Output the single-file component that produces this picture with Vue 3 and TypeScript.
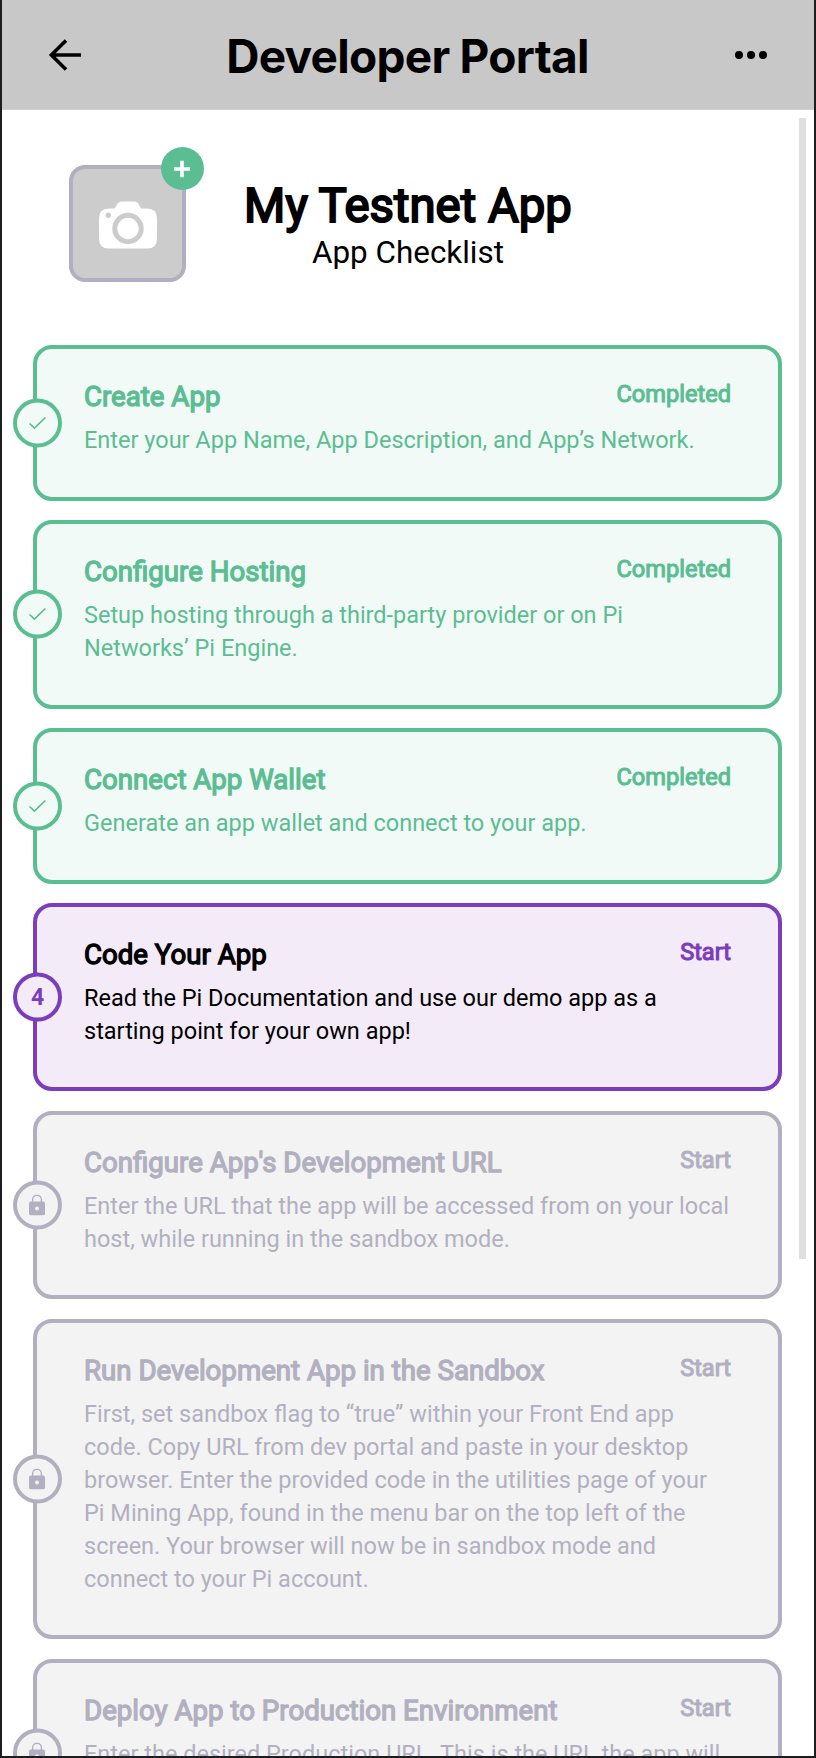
<script setup lang="ts">
type StepState = 'done' | 'active' | 'locked'

interface Step {
  title: string
  status: string
  state: StepState
  text: string
}

const steps: Step[] = [
  {
    title: 'Create App',
    status: 'Completed',
    state: 'done',
    text: 'Enter your App Name, App Description, and App’s Network.',
  },
  {
    title: 'Configure Hosting',
    status: 'Completed',
    state: 'done',
    text: 'Setup hosting through a third-party provider or on Pi\nNetworks’ Pi Engine.',
  },
  {
    title: 'Connect App Wallet',
    status: 'Completed',
    state: 'done',
    text: 'Generate an app wallet and connect to your app.',
  },
  {
    title: 'Code Your App',
    status: 'Start',
    state: 'active',
    text: 'Read the Pi Documentation and use our demo app as a\nstarting point for your own app!',
  },
  {
    title: "Configure App's Development URL",
    status: 'Start',
    state: 'locked',
    text: 'Enter the URL that the app will be accessed from on your local\nhost, while running in the sandbox mode.',
  },
  {
    title: 'Run Development App in the Sandbox',
    status: 'Start',
    state: 'locked',
    text: 'First, set sandbox flag to “true” within your Front End app\ncode. Copy URL from dev portal and paste in your desktop\nbrowser. Enter the provided code in the utilities page of your\nPi Mining App, found in the menu bar on the top left of the\nscreen. Your browser will now be in sandbox mode and\nconnect to your Pi account.',
  },
  {
    title: 'Deploy App to Production Environment',
    status: 'Start',
    state: 'locked',
    text: 'Enter the desired Production URL. This is the URL the app will',
  },
]
</script>

<template>
  <div class="screen">
    <header class="bar">
      <svg class="back" viewBox="0 0 34 34" width="34" height="34">
        <path d="M33 17H3.500M18 2.400L3.400 17L18 31.600" fill="none" stroke="#000" stroke-width="3.6" />
      </svg>
      <h1 class="bar-title">Developer Portal</h1>
      <svg class="more" viewBox="0 0 32 8" width="32" height="8">
        <circle cx="4" cy="4" r="4" />
        <circle cx="16" cy="4" r="4" />
        <circle cx="28" cy="4" r="4" />
      </svg>
    </header>

    <section class="app">
      <div class="avatar">
        <svg class="camera" viewBox="0 0 58 48" width="58" height="48">
          <path
            d="M10 7.5H15.500L18.600 2.600Q20 .5 22.500 .5H35.500Q38 .5 39.400 2.600L42 7.500H48Q58 7.500 58 17.500V37.500Q58 47.500 48 47.500H10Q0 47.500 0 37.500V17.500Q0 7.500 10 7.500Z"
            fill="#fff"
          />
          <circle cx="29" cy="27.500" r="13.200" fill="none" stroke="#ccc" stroke-width="5" />
          <circle cx="9.300" cy="14.200" r="2.700" fill="#ccc" />
        </svg>
        <span class="add">
          <svg viewBox="0 0 16 18" width="16" height="18">
            <path d="M8 .8V17.200M0 9H16" stroke="#fff" stroke-width="3.600" />
          </svg>
        </span>
      </div>
      <div class="app-text">
        <h2 class="app-name">My Testnet App</h2>
        <p class="app-sub">App Checklist</p>
      </div>
    </section>

    <ol class="steps">
      <li v-for="(step, i) in steps" :key="step.title" class="step" :class="step.state">
        <span class="badge">
          <svg v-if="step.state === 'done'" viewBox="0 0 17 13" width="17" height="13">
            <path d="M.6 7L5.400 11.600L16.400 1" fill="none" stroke="currentColor" stroke-width="1.700" />
          </svg>
          <span v-else-if="step.state === 'active'" class="num">{{ i + 1 }}</span>
          <svg v-else class="lock" viewBox="0 0 16 21" width="16" height="21">
            <path d="M3.600 8V5.200A4.400 4.400 0 0 1 12.400 5.200V8" fill="none" stroke="currentColor" stroke-width="1.400" />
            <rect x="0" y="7" width="16" height="14" rx="2" fill="currentColor" />
            <circle cx="8" cy="14" r="1.900" fill="#f3f3f3" />
          </svg>
        </span>
        <div class="row">
          <h3 class="title">{{ step.title }}</h3>
          <span class="status">{{ step.status }}</span>
        </div>
        <p class="desc">{{ step.text }}</p>
      </li>
    </ol>

    <div class="scrollbar"></div>
  </div>
</template>

<style>
body {
  margin: 0;
  overflow: hidden;
}
</style>

<style scoped>
.screen {
  position: relative;
  box-sizing: border-box;
  width: 816px;
  height: 1758px;
  overflow: hidden;
  border: 2px solid #1d1d20;
  border-top: 0;
  background: #fff;
  color: #000;
  font-family: Roboto, 'Liberation Sans', sans-serif;
}

h1,
h2,
h3,
p,
ol {
  margin: 0;
  padding: 0;
  font-weight: 400;
}

.bar {
  display: flex;
  align-items: center;
  justify-content: space-between;
  box-sizing: border-box;
  height: 110px;
  padding: 0 47px 0 46px;
  border-bottom: 1px solid #d2d2d2;
  background: #c8c8c8;
}

.bar-title {
  padding: 3px 2px 0 0;
  font-family: Inter, sans-serif;
  font-size: 46px;
  font-weight: 700;
  line-height: 56px;
  letter-spacing: -0.720px;
  white-space: nowrap;
}

.app {
  display: grid;
  grid-template-columns: 117px auto 117px;
  justify-content: space-between;
  box-sizing: border-box;
  height: 235.300px;
  padding: 55px 67px 0;
}

.avatar {
  position: relative;
  display: flex;
  align-items: center;
  justify-content: center;
  box-sizing: border-box;
  width: 117px;
  height: 117px;
  border: 4px solid #b2b0c0;
  border-radius: 16px;
  background: #ccc;
}

.camera {
  margin: 2px 0 0 0;
}

.add {
  position: absolute;
  top: -22px;
  right: -22px;
  display: flex;
  align-items: center;
  justify-content: center;
  box-sizing: border-box;
  width: 43px;
  height: 43px;
  padding-right: 1px;
  border-radius: 50%;
  background: #5bbd92;
}

.app-text {
  padding-top: 13px;
  text-align: center;
}

.app-name {
  font-size: 47.300px;
  line-height: 56px;
  white-space: nowrap;
  -webkit-text-stroke: 2px currentColor;
}

.app-sub {
  font-size: 31.400px;
  line-height: 38px;
}

.steps {
  display: flex;
  flex-direction: column;
  gap: 19.400px;
  margin: 0 32px 0 31px;
  list-style: none;
}

.step {
  position: relative;
  flex: none;
  box-sizing: border-box;
  padding: 32px 47px 39.500px 47px;
  border: 4px solid currentColor;
  border-radius: 19px;
}

.step:last-child {
  min-height: 188.500px;
}

.done {
  color: #5bbd92;
  background: #f2faf7;
}

.active {
  color: #7b3dbc;
  background: #f3ebf7;
}

.locked {
  color: #b2b0c0;
  background: #f3f3f3;
}

.badge {
  position: absolute;
  top: 50%;
  left: -24px;
  display: flex;
  align-items: center;
  justify-content: center;
  box-sizing: border-box;
  width: 49px;
  height: 49px;
  border: 4px solid currentColor;
  border-radius: 50%;
  background: inherit;
  transform: translateY(-50%);
}

.lock {
  margin-right: 1px;
}

.num {
  font-size: 23px;
  font-weight: 700;
  line-height: 28px;
}

.row {
  display: flex;
  align-items: flex-start;
  justify-content: space-between;
  height: 43px;
}

.title {
  font-size: 27.650px;
  line-height: 32px;
  white-space: nowrap;
  -webkit-text-stroke: 1.300px currentColor;
}

.status {
  font-size: 23.600px;
  line-height: 27px;
  -webkit-text-stroke: 1.100px currentColor;
}

.desc {
  font-size: 23.500px;
  line-height: 33px;
  white-space: pre;
}

.active .title,
.active .desc {
  color: #000;
}

.scrollbar {
  position: absolute;
  top: 118px;
  right: 8px;
  width: 7px;
  height: 1141px;
  background: #dfdfdf;
}
</style>
